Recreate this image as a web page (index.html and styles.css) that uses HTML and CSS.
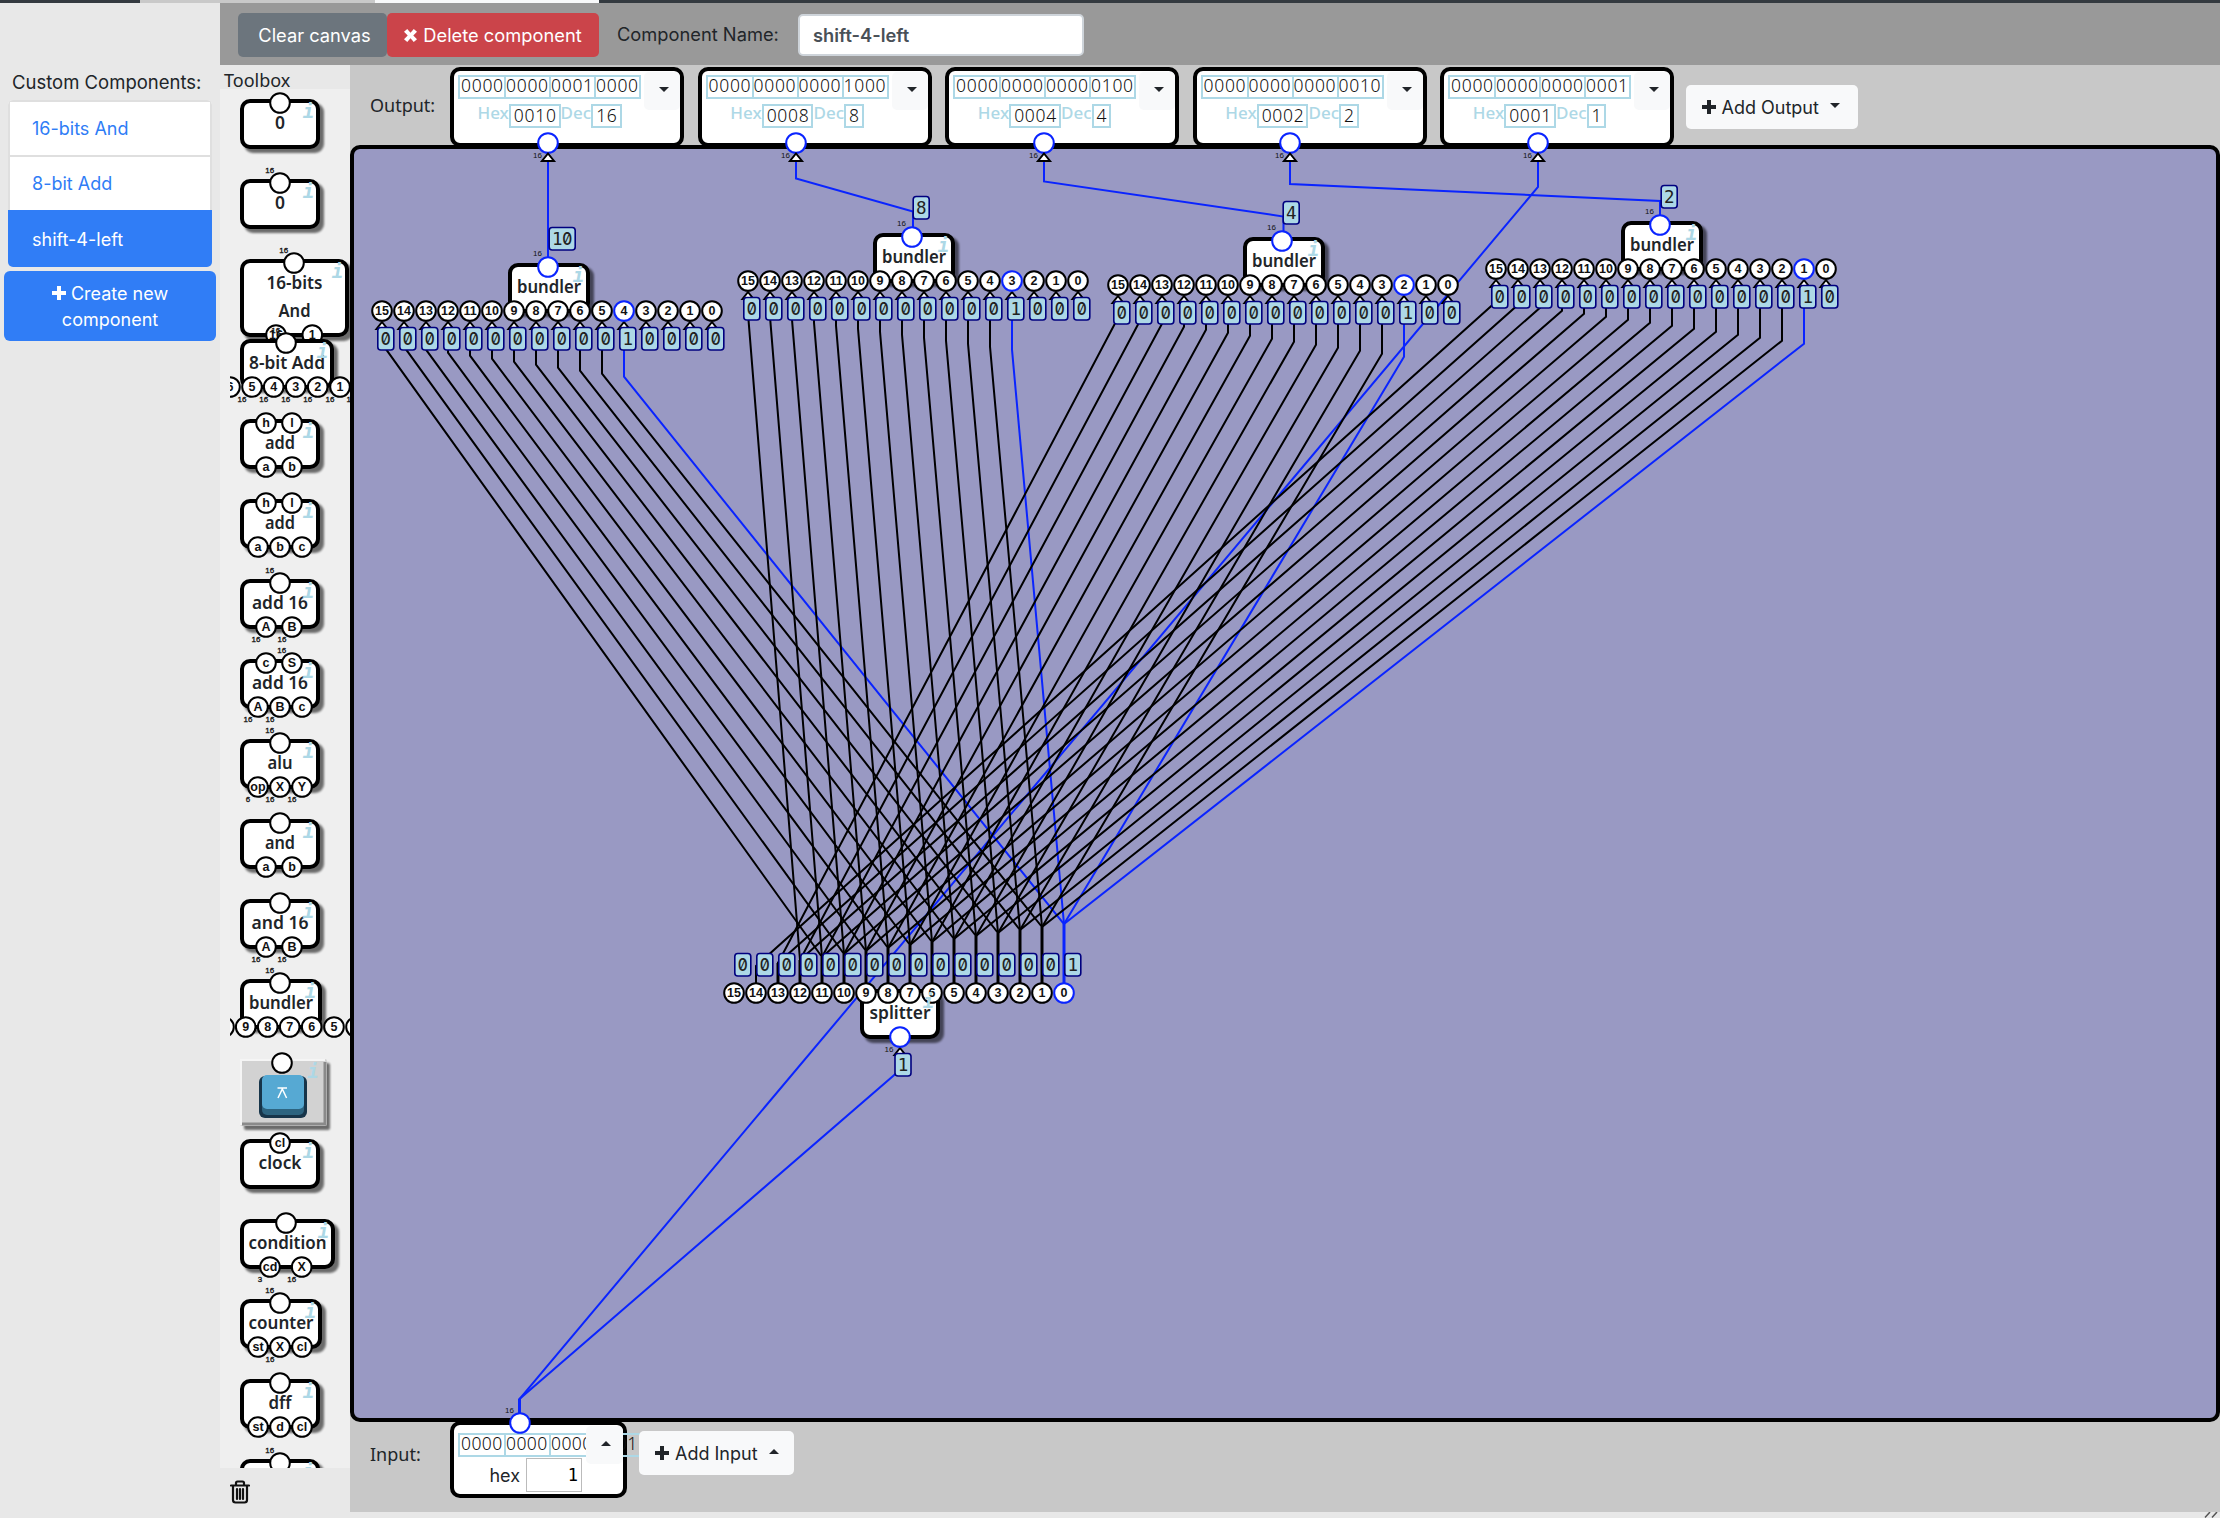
FILE: index.html
```html
<!DOCTYPE html>
<html lang="en">
<head>
<meta charset="utf-8">
<title>Circuit editor</title>
<link rel="stylesheet" href="styles.css">
</head>
<body>
<div class="tabstrip"><span class="tab tab-idle"></span><span class="tab tab-open"></span></div>
<div class="app">
  <aside class="sidebar">
    <div class="sidebar-title">Custom Components:</div>
    <ul class="component-list">
      <li>16-bits And</li>
      <li>8-bit Add</li>
      <li class="active">shift-4-left</li>
    </ul>
    <button class="create"><svg class="plus" viewBox="0 0 14 14"><path d="M5 0h4v5h5v4H9v5H5V9H0V5h5z"/></svg> Create new<br>component</button>
  </aside>
  <div class="editor">
    <header class="topbar">
      <button class="btn btn-clear">Clear canvas</button>
      <button class="btn btn-delete"><svg class="cross" viewBox="0 0 14 14"><path d="M3.5 0L7 4 10.500 0 14 3 10 7l4 4-3.500 3L7 10l-3.500 4L0 11l4-4-4-4z"/></svg>Delete component</button>
      <label class="name-label">Component Name:</label>
      <input class="name-input" value="shift-4-left">
    </header>
    <div class="body">
      <section class="toolbox">
        <div class="toolbox-title">Toolbox</div>
        <div class="toolbox-list" id="toolbox"></div>
        <div class="trash">
          <svg viewBox="0 0 20 24"><path d="M1 5.500h18M6 5V3q0-1.500 1.500-1.500h5q1.500 0 1.500 1.500v2M3 6v14q0 2.500 2.500 2.500h9q2.500 0 2.500-2.500V6M7 9v10M10 9v10M13 9v10"/></svg>
        </div>
      </section>
      <main class="workspace">
        <div class="row outputs" id="outputs">
          <span class="row-label">Output:</span>
        </div>
        <div class="canvas"></div>
        <div class="row inputs">
          <span class="row-label">Input:</span>
          <div class="card card-in">
            <div class="bits"><span>0000</span><span>0000</span><span>0000</span><span>0001</span></div>
            <div class="drop drop-up"><i class="caret up"></i></div>
            <div class="hexline"><span>hex</span><input value="1"></div>
          </div>
          <button class="add add-in"><svg class="plus" viewBox="0 0 14 14"><path d="M5 0h4v5h5v4H9v5H5V9H0V5h5z"/></svg>Add Input<i class="caret up"></i></button>
        </div>
        <svg class="diagram" id="diagram" viewBox="350 65 1870 1447"></svg>
      </main>
    </div>
    <footer class="grip"><svg viewBox="0 0 16 6"><path d="M1 5.500L6 0M8 5.500L13 0"/></svg></footer>
  </div>
</div>
<script src="app.js"></script>
</body>
</html>
```
FILE: styles.css
```css
* { box-sizing: border-box; }
body { margin: 0; width: 2220px; height: 1534px; overflow: hidden; background: #fff; color: #212529; font-family: Inter, "Liberation Sans", sans-serif; font-size: 18px; }
button, input { font: inherit; border: 0; margin: 0; padding: 0; }
.tabstrip { height: 3px; background: #343a40; display: flex; padding-left: 140px; }
.tab { height: 3px; }
.tab-idle { width: 235px; background: #c9c9c9; }
.tab-open { width: 224px; background: #f8f9fa; }
.app { display: flex; height: 1515px; background: #e8e8e8; }
.sidebar { width: 220px; padding: 66px 4px 0; }
.sidebar-title { padding-left: 8px; height: 31px; line-height: 27px; font-size: 18.500px; white-space: nowrap; }
.component-list { list-style: none; margin: 0 4px 4px; padding: 0; border-radius: 5px; overflow: hidden; color: #2f7df6; }
.component-list li { height: 55px; padding-left: 22px; background: #fff; border: 2px solid #dfdfdf; border-bottom: 0; line-height: 53px; }
.component-list .active { height: 57px; padding-left: 24px; background: #307df6; color: #fff; border: 0; line-height: 59px; }
.create { width: 212px; height: 70px; border-radius: 6px; background: #307df6; color: #fff; line-height: 26px; padding-top: 1px; }
.plus { width: 14px; height: 14px; fill: currentColor; }
.editor { flex: 1; display: flex; flex-direction: column; }
.topbar { height: 62px; background: #999; display: flex; align-items: center; padding: 0 0 0 18px; }
.btn { height: 44px; border-radius: 5px; color: #fff; margin-top: 1px; }
.btn-clear { width: 149px; background: #6c757d; padding-left: 4px; font-size: 18.300px; }
.btn-delete { width: 212px; background: #cb444a; font-size: 18.300px; }
.cross { width: 13px; height: 13px; fill: #fff; margin-right: 6px; }
.name-label { width: 181px; margin-left: 18px; font-size: 18.300px; }
.name-input { width: 286px; height: 42px; border: 2px solid #ced4da; border-radius: 5px; padding-left: 13px; font-weight: 600; font-size: 18.300px; color: #495057; background: #fff; margin-top: 1px; }
.body { display: flex; height: 1447px; }
.toolbox { width: 130px; display: flex; flex-direction: column; }
.toolbox-title, .row-label { font-family: "Noto Sans", sans-serif; }
.toolbox-title { height: 24px; line-height: 31px; padding-left: 4px; }
.toolbox-list { height: 1379px; overflow: hidden; background: #efefef; padding-left: 10px; }
.tool-clip { width: 120px; height: 1379px; overflow: hidden; padding-top: 10px; }
.tool { display: block; width: 120px; height: 80px; overflow: visible; }
.trash { padding: 12px 0 0 10px; }
.trash svg { width: 20px; height: 24px; fill: none; stroke: #111; stroke-width: 2.200; stroke-linecap: round; }
.workspace { position: relative; width: 1870px; height: 1447px; background: #c8c8c8; display: flex; flex-direction: column; }
.row { display: flex; align-items: flex-start; padding-left: 20px; }
.outputs { height: 80px; padding-top: 2px; }
.inputs { height: 90px; }
.row-label { width: 80px; flex: none; line-height: 24px; margin-top: 26px; }
.inputs .row-label { margin-top: 20px; }
.canvas { height: 1277px; border: 4px solid #000; border-radius: 10px; background: #9999c3; flex: none; }
.card { position: relative; flex: none; width: 234px; height: 80px; border: 4px solid #000; border-radius: 10px; background: #fff; margin-right: 13.500px; padding: 4px 0 0 4px; }
.readout { width: 183px; display: flex; flex-direction: column; align-items: center; gap: 5px; }
.bits, .num { font-family: "Noto Sans", sans-serif; font-weight: 300; font-size: 17.500px; letter-spacing: 0.700px; line-height: 17px; color: #111; }
.bits { display: flex; width: 183px; height: 24px; border: 2px solid #add8e6; }
.bits span { flex: 1 1 0; min-width: 0; padding-left: 1px; }
.bits span + span { border-left: 2px solid #add8e6; padding-left: 0; }
.values { display: flex; align-items: flex-start; color: #add8e6; font-family: "Noto Sans", sans-serif; font-weight: 500; font-size: 17px; line-height: 18px; height: 24px; }
.num { border: 2px solid #add8e6; height: 24px; padding: 0 2px 0 3px; min-width: 19px; line-height: 18px; }
.drop { position: absolute; top: 1px; right: 0; width: 36px; height: 38px; background: #f8f9fa; border-radius: 5px; }
.caret { display: inline-block; width: 0; height: 0; border: 5px solid transparent; border-top-color: #212529; border-bottom: 0; }
.caret.up { border-top: 0; border-bottom: 5px solid #212529; }
.drop .caret { display: block; margin: 15px 0 0 15px; }
.add { flex: none; height: 44px; border-radius: 5px; background: #f8f9fa; color: #212529; display: flex; align-items: center; padding-left: 16px; white-space: nowrap; }
.add .plus { margin-right: 6px; }
.add .caret { margin: -4px 0 0 11px; }
.add-out { width: 172px; margin: 18px 0 0 -2px; }
.add-in { width: 155px; margin-top: 9px; position: relative; }
.card-in { width: 177px; height: 77px; margin: -1px 12px 0 0; padding: 8px 0 0 4px; }
.card-in .bits { letter-spacing: 0.400px; }
.drop-up { width: 37px; }
.hexline { display: flex; align-items: center; justify-content: flex-end; gap: 6px; padding-right: 41px; margin-top: 1px; }
.hexline input { width: 56px; height: 34px; border: 1px solid #bbb; text-align: right; padding-right: 3px; font-family: "DejaVu Sans Mono", monospace; font-size: 17px; background: #fff; color: #000; }
.diagram { position: absolute; left: 0; top: 0; width: 1870px; height: 1447px; }
.grip { height: 6px; text-align: right; line-height: 0; }
.grip svg { width: 16px; height: 6px; stroke: #555; stroke-width: 1.500; }

.wire { fill: none; stroke: #000; stroke-width: 2; }
.wire.on { stroke: #0a24ff; }
.wire.trunk { stroke-width: 3; }
.chip { fill: #fff; stroke: #000; stroke-width: 4; }
.shade { fill: #000; opacity: .55; filter: blur(1px); }
.chip-label { font: 600 17.500px "Noto Sans", sans-serif; fill: #212529; text-anchor: middle; }
.info { font: italic bold 19px "DejaVu Sans Mono", monospace; fill: #add8e6; text-anchor: middle; }
.port { fill: #fff; stroke: #000; stroke-width: 2; }
.port.on { stroke: #0a24ff; }
.port-label { font: bold 12.500px "Liberation Sans", sans-serif; text-anchor: middle; fill: #111; }
.width-label { font: 8px "Liberation Sans", sans-serif; text-anchor: middle; fill: #111; }
.toolbox .width-label { stroke: #111; stroke-width: .3; }
.arrow { fill: #fff; stroke: #000; stroke-width: 2; }
.value { fill: #add8e6; stroke: #00007f; stroke-width: 1.600; }
.value-one { font: 17.500px "DejaVu Sans Mono", monospace; text-anchor: middle; fill: #222; }
.value-zero { font: 500 17.500px Inter, sans-serif; font-feature-settings: "zero"; text-anchor: middle; fill: #222; }
.key-base { fill: #d2d2d2; }
.key-light { fill: none; stroke: #f5f5f5; stroke-width: 2; }
.key-dark { fill: none; stroke: #8a8a8a; stroke-width: 3; }
.key-well { fill: #17354a; }
.key-side { fill: #2d6480; }
.key-cap { fill: #56a9d3; }
.key-mark { fill: none; stroke: #fff; stroke-width: 1.500; }
```
FILE: app.js
```js
const text = (cls, x, y, s, w) => s === '' ? '' :
  `<text class="${cls}" x="${x}" y="${y}"${w ? ` textLength="${w}" lengthAdjust="spacingAndGlyphs"` : ''}>${s}</text>`;
const rect = (cls, x, y, w, h, r) =>
  `<rect class="${cls}" x="${x}" y="${y}" width="${w}" height="${h}" rx="${r}"/>`;
const port = (x, y, label, on) =>
  `<circle class="port${on ? ' on' : ''}" cx="${x}" cy="${y}" r="9.8"/>` + text('port-label', x, y + 4.3, label);
const wire = (points, on) => `<polyline class="wire${on ? ' on' : ''}" points="${points}"/>`;
const arrow = (x, y) => `<path class="arrow" d="M${x} ${y + 1}l5.500 7h-11z"/>`;
const chip = (x, y, w, h, lines, width) =>
  rect('shade', x + 4, y + 4, w, h, 9) + rect('chip', x + 2, y + 2, w - 4, h - 4, 8) +
  lines.map((s, i) => text('chip-label', x + w / 2, y + 30 + i * 28, s, width[i])).join('');
const info = (x, y, w) => text('info', x + w - 11.500, y + 19, 'i');
const value = (x, y, s) => {
  const w = s.length > 1 ? 26 : 16;
  return rect('value', x + .5, y + .5, w, 22.500, 3) +
    [...s].map((c, i) => c === '0'
      ? text('value-zero', x + 8.500 + i * 10, y + 18.200, c, 10)
      : text('value-one', x + 8.500 + i * 10, y + 18.200, c)).join('');
};

// Toolbox: name lines, their widths, chip width, top ports, bottom ports.
// A port is [x, label, bus width].
const tools = [
  { n: ['0'], l: [10], w: 80, t: [[50, '', '']] },
  { n: ['0'], l: [10], w: 80, t: [[50, '', 16]] },
  { n: ['16-bits', 'And'], l: [56, 32], w: 109, h: 78, t: [[64, '', 16]], b: [[46, '16', ''], [82.300, '1', '']] },
  { n: ['8-bit Add'], l: [76], w: 94, t: [[56, '', 16]], b: [[0, '6', ''], [22, '5', 16], [43.700, '4', 16], [65.700, '3', 16], [87.700, '2', 16], [110, '1', 16], [131, '0', 16]] },
  { n: ['add'], l: [30], w: 80, t: [[36, 'h', ''], [62, 'l', '']], b: [[36, 'a', ''], [62, 'b', '']] },
  { n: ['add'], l: [30], w: 80, t: [[36, 'h', ''], [62, 'l', '']], b: [[28, 'a', ''], [50, 'b', ''], [72, 'c', '']] },
  { n: ['add 16'], l: [56], w: 80, t: [[50, '', 16]], b: [[36, 'A', 16], [62, 'B', 16]] },
  { n: ['add 16'], l: [56], w: 80, t: [[36, 'c', ''], [62, 'S', 16]], b: [[28, 'A', 16], [50, 'B', 16], [72, 'c', '']] },
  { n: ['alu'], l: [25], w: 80, t: [[50, '', 16]], b: [[28, 'op', 6], [50, 'X', 16], [72, 'Y', 16]] },
  { n: ['and'], l: [30], w: 80, t: [[50, '', '']], b: [[36, 'a', ''], [62, 'b', '']] },
  { n: ['and 16'], l: [57], w: 80, t: [[50, '', '']], b: [[36, 'A', 16], [62, 'B', 16]] },
  { n: ['bundler'], l: [64], w: 82, t: [[50, '', 16]], b: [[-6, '', ''], [15.700, '9', ''], [37.700, '8', ''], [59.700, '7', ''], [81.700, '6', ''], [104, '5', ''], [126, '', '']] },
  { key: true },
  { n: ['clock'], l: [43], w: 80, t: [[50, 'cl', '']] },
  { n: ['condition'], l: [78], w: 95, t: [[56, '', '']], b: [[40, 'cd', 3], [71.700, 'X', 16]] },
  { n: ['counter'], l: [65], w: 82, t: [[50, '', 16]], b: [[28, 'st', ''], [50, 'X', 16], [72, 'cl', '']] },
  { n: ['dff'], l: [23], w: 80, t: [[50, '', '']], b: [[28, 'st', ''], [50, 'd', ''], [72, 'cl', '']] },
  { n: [''], l: [0], w: 80, t: [[50, '', 16]] },
];

const keyArt = () =>
  rect('shade', 14, 4, 86, 67, 2) + rect('key-base', 10, 0, 87, 67, 2) +
  '<path class="key-dark" d="M95 3V65H12"/><path class="key-light" d="M11 66V1H95"/>' +
  rect('key-well', 29, 17, 48, 42, 6) + rect('key-side', 32, 17, 42, 39, 5) + rect('key-cap', 32, 16, 42, 34, 5) +
  '<path class="key-mark" d="M47.500 29h9.500M48 39l4.300-9 4.300 9"/>' +
  text('info', 83, 19, 'i') + port(52, 4, '', false);

const toolArt = t => t.key ? keyArt()
  : chip(10, 0, t.w, t.h || 50, t.n, t.l) + info(10, 0, t.w) +
    (t.t || []).map(([x, s, b]) => port(x, 4, s, false) + text('width-label', x - 10.300, -6, b)).join('') +
    (t.b || []).map(([x, s, b]) => port(x, (t.h || 50) - 2, s, false) + text('width-label', x - 10, (t.h || 50) + 13, b)).join('');

document.getElementById('toolbox').innerHTML =
  `<div class="tool-clip">${tools.map(t => `<svg class="tool" viewBox="0 0 120 80">${toolArt(t)}</svg>`).join('')}</div>`;

const outputs = [
  ['0000 0000 0001 0000', '0010', '16'],
  ['0000 0000 0000 1000', '0008', '8'],
  ['0000 0000 0000 0100', '0004', '4'],
  ['0000 0000 0000 0010', '0002', '2'],
  ['0000 0000 0000 0001', '0001', '1'],
];
document.getElementById('outputs').insertAdjacentHTML('beforeend', outputs.map(([bits, hex, dec]) =>
  `<div class="card"><div class="readout"><div class="bits">${bits.split(' ').map(b => `<span>${b}</span>`).join('')}</div>
   <div class="values">Hex<span class="num">${hex}</span>Dec<span class="num">${dec}</span></div></div>
   <div class="drop"><i class="caret"></i></div></div>`).join('') +
  '<button class="add add-out"><svg class="plus" viewBox="0 0 14 14"><path d="M5 0h4v5h5v4H9v5H5V9H0V5h5z"/></svg>Add Output<i class="caret"></i></button>');

// Bundlers: chip x/y, first port x, output port x, shift amount, shown value.
const bundlers = [
  { x: 508, y: 263, px: 382, ox: 548, s: 4, v: '10', vy: 227 },
  { x: 873, y: 233, px: 748, ox: 912, s: 3, v: '8', vy: 196 },
  { x: 1243, y: 237, px: 1118, ox: 1282, s: 2, v: '4', vy: 201 },
  { x: 1621, y: 221, px: 1496, ox: 1660, s: 1, v: '2', vy: 185 },
];
const outX = [548, 796, 1044, 1290, 1538];
const bits = [...Array(16).keys()];
const splitX = i => 1064 - 22 * i;

let art = wire('548,161 548,260', true) +
  wire('796,161 796,178.500 913,211.500 913,230', true) +
  wire('1044,161 1044,181.500 1283.500,216.500 1283.500,232', true) +
  wire('1290,161 1290,184 1660,201 1660,218', true) +
  wire('1538,161 1538,187 519.500,1399 519.500,1418', true) +
  wire('900,1055 900,1070 519.500,1399 519.500,1418', true);
for (const b of bundlers) {
  for (const i of bits.filter(n => n >= b.s).reverse()) {
    const from = i - b.s, x = b.px + 22 * (15 - i), y = b.y + 48;
    art += wire(`${x},${y + 16} ${x},${y + 77.700 - 3 * i} ${splitX(from)},${924 + 3 * from} ${splitX(from)},985`, from === 0);
  }
}
for (const i of bits.slice(0, 14)) {
  art += `<path class="wire trunk${i ? '' : ' on'}" d="M${splitX(i)} ${924 + 3 * i}V985"/>`;
}
art += '<path class="wire trunk on" d="M519.500 1399V1418"/>';
for (const b of bundlers) {
  art += chip(b.x, b.y, 82, 50, ['bundler'], [64]);
  art += port(b.ox, b.y + 4, '', true) + text('width-label', b.ox - 10.500, b.y - 7, '16');
  for (const i of bits) {
    const x = b.px + 22 * (15 - i), y = b.y + 48;
    art += arrow(x, y + 10) + port(x, y, i, i === b.s) + value(x - 4.700, y + 16, i === b.s ? '1' : '0');
  }
  art += info(b.x, b.y, 82) + value(b.ox + .7, b.vy, b.v);
}
art += chip(860, 989, 80, 50, ['splitter'], [61]);
for (const i of bits) art += port(splitX(i), 993, i, i === 0) + value(splitX(i) + .3, 953, i ? '0' : '1');
art += info(860, 989, 80) + arrow(900, 1047) + port(900, 1037, '', true) +
  text('width-label', 889, 1052, '16') + value(894.500, 1053, '1');
for (const x of outX) art += port(x, 143, '', true) + `<path class="arrow" d="M${x} 153.500l6 7.500h-12z"/>` + text('width-label', x - 10.500, 158, '16');
art += port(520, 1423, '', true) + text('width-label', 509.500, 1413, '16');
document.getElementById('diagram').innerHTML = art;
```
